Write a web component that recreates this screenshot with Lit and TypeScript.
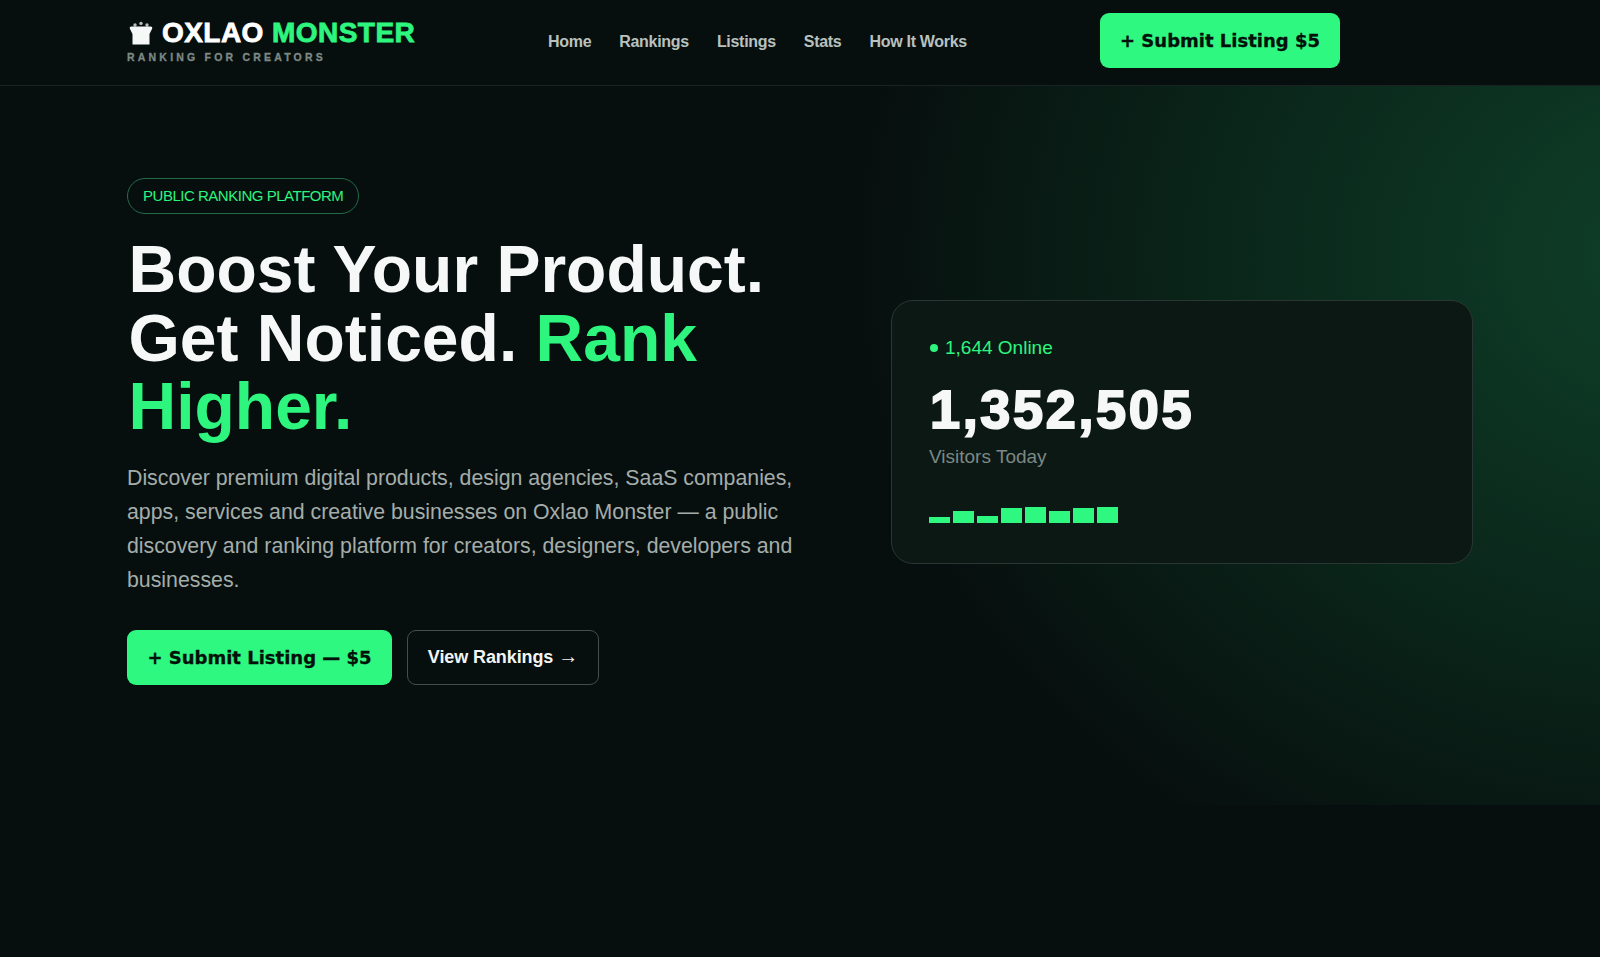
import { css, html, LitElement } from "lit";
import { customElement } from "lit/decorators.js";

const NAV_LINKS = ["Home", "Rankings", "Listings", "Stats", "How It Works"];
const BARS = [6, 12, 7, 15, 16, 12, 15, 16];

@customElement("app-root")
export class AppRoot extends LitElement {
  static styles = css`
    :host {
      display: block;
      min-height: 957px;
      background: #070f0e;
      color: #fff;
      font-family: "Liberation Sans", Arial, sans-serif;
    }

    .header {
      display: flex;
      align-items: center;
      height: 84px;
      padding: 0 260px 1px 127px;
      border-bottom: 1px solid #1a2321;
      background: #070f0e;
    }

    .logo {
      width: 421px;
      margin-top: -3px;
    }

    .logo-main {
      display: flex;
      align-items: center;
      font-size: 28px;
      line-height: 32px;
      font-weight: 700;
      letter-spacing: 0.45px;
      -webkit-text-stroke: 0.8px currentColor;
    }

    .crown {
      flex: none;
      width: 24px;
      height: 24px;
      margin: 0 9px 0 2px;
    }

    .logo-main em {
      font-style: normal;
      color: #2df57e;
    }

    .logo-sub {
      margin-top: 2px;
      font-size: 10.5px;
      line-height: 13px;
      font-weight: 700;
      letter-spacing: 3.2px;
      color: #7c8985;
      -webkit-text-stroke: 0.3px currentColor;
    }

    .nav {
      display: flex;
      gap: 28px;
      flex: 1;
    }

    .nav a {
      font-size: 16px;
      font-weight: 700;
      letter-spacing: -0.3px;
      color: #b9c1be;
      text-decoration: none;
    }

    .btn-primary {
      display: inline-flex;
      align-items: center;
      justify-content: center;
      border-radius: 9px;
      background: #2ef87f;
      color: #04100a;
      font-family: "DejaVu Sans", sans-serif;
      font-weight: 700;
      text-decoration: none;
      -webkit-text-stroke: 0.3px currentColor;
    }

    .header .btn-primary {
      width: 240px;
      height: 55px;
      margin-top: -3px;
      font-size: 18px;
    }

    .hero {
      display: grid;
      grid-template-columns: 764px 582px;
      align-items: center;
      height: 719px;
      box-sizing: border-box;
      padding: 0 0 0 127px;
      background: radial-gradient(
        ellipse 830px 700px at 1680px 170px,
        rgba(20, 92, 56, 0.64),
        rgba(14, 68, 42, 0.48) 50%,
        rgba(7, 15, 14, 0) 100%
      );
    }

    .copy {
      align-self: start;
      padding-top: 92px;
    }

    .badge {
      display: inline-block;
      box-sizing: border-box;
      height: 36px;
      padding: 0 15px;
      border: 1px solid #236b49;
      border-radius: 18px;
      font-size: 15px;
      line-height: 34px;
      letter-spacing: -0.48px;
      color: #2df57e;
    }

    h1 {
      margin: 21px 0 0;
      padding-left: 1.5px;
      font-size: 66px;
      line-height: 68.5px;
      font-weight: 700;
      color: #f6f8f7;
    }

    h1 em {
      font-style: normal;
      color: #2df57e;
    }

    .lead {
      width: 690px;
      margin: 20px 0 0;
      font-size: 21.3px;
      line-height: 34.2px;
      color: #a4adaa;
    }

    .actions {
      display: flex;
      gap: 15px;
      margin-top: 33px;
    }

    .actions .btn-primary {
      width: 265px;
      height: 55px;
      font-size: 18px;
    }

    .btn-ghost {
      display: inline-flex;
      align-items: center;
      justify-content: center;
      gap: 5px;
      box-sizing: border-box;
      width: 192px;
      height: 55px;
      border: 1px solid #454e4c;
      border-radius: 9px;
      font-size: 18px;
      font-weight: 700;
      letter-spacing: -0.1px;
      color: #f2f5f4;
      text-decoration: none;
    }

    .btn-ghost span {
      margin-top: -2px;
      font-size: 20px;
    }

    .card {
      box-sizing: border-box;
      height: 264px;
      margin-top: -27px;
      padding: 35px 37px;
      border: 1px solid #2a3633;
      border-radius: 22px;
      background: #0b1814;
    }

    .online {
      display: flex;
      align-items: center;
      gap: 7px;
      padding-left: 1px;
      font-size: 19px;
      line-height: 24px;
      color: #2df57e;
    }

    .online i {
      width: 8px;
      height: 8px;
      border-radius: 50%;
      background: #2df57e;
    }

    .count {
      margin-top: 19px;
      padding-left: 1px;
      font-size: 54px;
      line-height: 60px;
      font-weight: 700;
      letter-spacing: 2.65px;
      color: #f6f8f7;
      -webkit-text-stroke: 2px currentColor;
    }

    .label {
      margin-top: 6px;
      font-size: 19px;
      line-height: 24px;
      color: #7d8885;
    }

    .bars {
      display: flex;
      align-items: flex-end;
      gap: 3px;
      height: 20px;
      margin-top: 34px;
    }

    .bars i {
      width: 21px;
      background: #2ef87f;
    }
  `;

  render() {
    return html`
      <header class="header">
        <div class="logo">
          <div class="logo-main">
            <svg class="crown" viewBox="0 0 24 24" fill="#f6f8f7" aria-hidden="true">
              <circle cx="6" cy="4" r="1.7" opacity="0.75" />
              <circle cx="12" cy="2.4" r="1.7" opacity="0.75" />
              <circle cx="18" cy="4" r="1.7" opacity="0.75" />
              <path d="M1 8Q0 5.5 2.5 5.5H21.5Q24 5.5 23 8L20.5 13V23.5H3.5V13Z" />
            </svg>
            <span>OXLAO <em>MONSTER</em></span>
          </div>
          <div class="logo-sub">RANKING FOR CREATORS</div>
        </div>
        <nav class="nav">
          ${NAV_LINKS.map((link) => html`<a href="#">${link}</a>`)}
        </nav>
        <a class="btn-primary" href="#">+ Submit Listing $5</a>
      </header>
      <section class="hero">
        <div class="copy">
          <span class="badge">PUBLIC RANKING PLATFORM</span>
          <h1>Boost Your Product.<br />Get Noticed. <em>Rank<br />Higher.</em></h1>
          <p class="lead">
            Discover premium digital products, design agencies, SaaS companies,
            apps, services and creative businesses on Oxlao Monster — a public
            discovery and ranking platform for creators, designers, developers
            and businesses.
          </p>
          <div class="actions">
            <a class="btn-primary" href="#">+ Submit Listing — $5</a>
            <a class="btn-ghost" href="#">View Rankings <span>→</span></a>
          </div>
        </div>
        <aside class="card">
          <div class="online"><i></i>1,644 Online</div>
          <div class="count">1,352,505</div>
          <div class="label">Visitors Today</div>
          <div class="bars">
            ${BARS.map((h) => html`<i style="height: ${h}px"></i>`)}
          </div>
        </aside>
      </section>
    `;
  }
}
